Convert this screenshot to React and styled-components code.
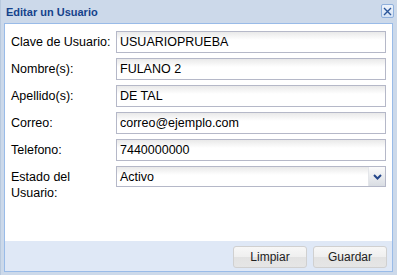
import React from "react";
import styled, { createGlobalStyle } from "styled-components";

const Global = createGlobalStyle`
  html, body { margin: 0; padding: 0; background: #ccd9ea; }
  * { box-sizing: border-box; }
`;

const Window = styled.div`
  width: 397px;
  height: 275px;
  background: #ccd9ea;
  border-left: 1px solid #b8c9de;
  display: flex;
  flex-direction: column;
  font-family: "Liberation Sans", Arial, sans-serif;
`;

const Header = styled.div`
  height: 23px;
  padding: 0 3px 0 5px;
  display: flex;
  align-items: flex-start;
  justify-content: space-between;
`;

const Title = styled.div`
  margin-top: 6px;
  font-size: 11px;
  font-weight: bold;
  color: #15428b;
`;

const Close = styled.div`
  margin-top: 4px;
  width: 13px;
  height: 14px;
  border: 1px solid #8fb0dc;
  border-radius: 2px;
  background: linear-gradient(#eef4fc, #d4e2f4);
  display: flex;
  align-items: center;
  justify-content: center;
`;

const Panel = styled.div`
  margin: 0 4px 0 3px;
  height: 249px;
  border: 1px solid #99bbe8;
  display: flex;
  flex-direction: column;
`;

const Form = styled.div`
  flex: 1;
  background: #fff;
  padding: 7px 6px 0 6px;
  display: flex;
  flex-direction: column;
  gap: 5px;
`;

const Row = styled.div`
  display: grid;
  grid-template-columns: 105px 1fr;
  align-items: start;
`;

const Label = styled.label`
  font-size: 12.5px;
  color: #000;
  line-height: 16px;
  padding-top: 3px;
  padding-right: 4px;
`;

const Input = styled.div`
  height: 22px;
  border: 1px solid #b5b8c8;
  background: linear-gradient(#e9e9e9, #fff 8px);
  font-size: 12.5px;
  color: #000;
  padding: 0 3px;
  display: flex;
  align-items: center;
`;

const SelectBox = styled(Input)`
  height: 21px;
  padding-right: 0;
  justify-content: space-between;
`;

const Trigger = styled.div`
  width: 17px;
  height: 19px;
  background: linear-gradient(#fbfbfb, #d9dde3);
  border-left: 1px solid #e4e6ea;
  display: flex;
  align-items: center;
  justify-content: center;
`;

const ButtonBar = styled.div`
  height: 30px;
  background: #dfe8f6;
  padding: 5px 5px 0 0;
  display: flex;
  justify-content: flex-end;
  gap: 6px;
`;

const Button = styled.button`
  width: 74px;
  height: 22px;
  border: 1px solid #d0d0d0;
  border-radius: 3px;
  background: linear-gradient(#f7f7f7 0%, #efefef 50%, #e2e2e2 51%, #e6e6e6 100%);
  font-family: "Liberation Sans", Arial, sans-serif;
  font-size: 12px;
  color: #222;
  padding: 0;
`;

const fields = [
  ["Clave de Usuario:", "USUARIOPRUEBA"],
  ["Nombre(s):", "FULANO 2"],
  ["Apellido(s):", "DE TAL"],
  ["Correo:", "correo@ejemplo.com"],
  ["Telefono:", "7440000000"],
];

export default function App() {
  return (
    <>
      <Global />
      <Window>
        <Header>
          <Title>Editar un Usuario</Title>
          <Close>
            <svg width="9" height="9" viewBox="0 0 9 9">
              <path d="M1 1L8 8M8 1L1 8" stroke="#2a5599" strokeWidth="1.4" />
            </svg>
          </Close>
        </Header>
        <Panel>
          <Form>
            {fields.map(([l, v]) => (
              <Row key={l}>
                <Label>{l}</Label>
                <Input>{v}</Input>
              </Row>
            ))}
            <Row>
              <Label>Estado del Usuario:</Label>
              <SelectBox>
                Activo
                <Trigger>
                  <svg width="9" height="6" viewBox="0 0 9 6">
                    <path d="M1 1L4.5 4.5L8 1" stroke="#24468a" strokeWidth="2" fill="none" />
                  </svg>
                </Trigger>
              </SelectBox>
            </Row>
          </Form>
          <ButtonBar>
            <Button>Limpiar</Button>
            <Button>Guardar</Button>
          </ButtonBar>
        </Panel>
      </Window>
    </>
  );
}
